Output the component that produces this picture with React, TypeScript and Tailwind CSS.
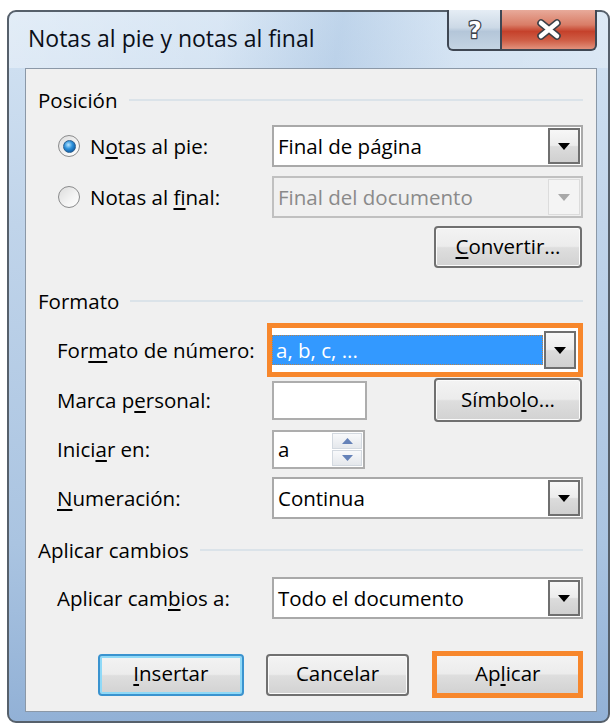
import React from "react";

function Caret({ disabled }: { disabled?: boolean }) {
  return (
    <svg width="12" height="7" viewBox="0 0 12 7">
      <path d="M0 0H12L6 7Z" fill={disabled ? "#a8a8a8" : "#000"} />
    </svg>
  );
}

function SpinArrow({ up }: { up?: boolean }) {
  return (
    <svg width="11" height="6" viewBox="0 0 11 6">
      <path d={up ? "M0 6H11L5.5 0Z" : "M0 0H11L5.5 6Z"} fill="#6582b8" />
    </svg>
  );
}

function Dropdown({ value, disabled }: { value: string; disabled?: boolean }) {
  return (
    <div
      className={`flex h-[42px] w-[311px] items-stretch border-2 ${
        disabled ? "border-[#c0c0c0] bg-[#f0f0f0]" : "border-[#a9a9a9] bg-white"
      }`}
    >
      <div className={`flex flex-1 items-center pl-[4px] ${disabled ? "text-[#8a8a8a]" : "text-black"}`}>{value}</div>
      {disabled ? (
        <div className="my-[1px] mr-[1px] flex w-[32px] items-center justify-center border border-[#dcdcdc] bg-[#f4f4f4]">
          <Caret disabled />
        </div>
      ) : (
        <div className="my-[1px] mr-[1px] flex w-[32px] items-center justify-center border-2 border-[#6f6f6f] bg-[linear-gradient(#f7f7f7,#ececec_48%,#dcdcdc_52%,#d0d0d0)]">
          <Caret />
        </div>
      )}
    </div>
  );
}

function Button({
  children,
  className,
  variant,
}: {
  children: React.ReactNode;
  className: string;
  variant?: "default" | "marked";
}) {
  if (variant === "marked") {
    return (
      <div className={`flex h-[47px] border-[5px] border-[#f7872c] ${className}`}>
        <div className="flex flex-1 items-center justify-center bg-[linear-gradient(#f3f3f3,#ececec_48%,#dedede_52%,#d2d2d2)] pb-[2px]">
          {children}
        </div>
      </div>
    );
  }
  const border =
    variant === "default"
      ? "border-[#3a93cf] shadow-[inset_0_0_0_2px_#8fd9f7]"
      : "border-[#707070] shadow-[inset_0_0_0_1px_#fbfbfb]";
  return (
    <div
      className={`flex h-[42px] items-center justify-center rounded-[4px] border-2 ${border} bg-[linear-gradient(#f3f3f3,#ececec_48%,#dedede_52%,#d2d2d2)] pb-[2px] ${className}`}
    >
      {children}
    </div>
  );
}

function Radio({ checked }: { checked?: boolean }) {
  return (
    <div className="flex h-[22px] w-[22px] items-center justify-center rounded-full border border-[#8a8b8c] bg-[linear-gradient(135deg,#dcdcdc,#f4f4f4_60%,#ffffff)]">
      {checked && (
        <div className="h-[13px] w-[13px] rounded-full border border-[#2c5f8e] bg-[radial-gradient(circle_at_40%_35%,#b9e6ff_0%,#2f93dc_40%,#0b559f_85%)]" />
      )}
    </div>
  );
}

function U({ children }: { children: React.ReactNode }) {
  return <span className="underline decoration-[2px] underline-offset-[3px]">{children}</span>;
}

function GroupHeader({ title }: { title: string }) {
  return (
    <div className="flex h-[24px] items-center gap-[11px]">
      <span>{title}</span>
      <div className="h-[2px] flex-1 bg-[#dbe3e9]" />
    </div>
  );
}

function Label({ children }: { children: React.ReactNode }) {
  return <div className="w-[234px] shrink-0 pl-[19px]">{children}</div>;
}

export default function App() {
  return (
    <div className="h-[725px] w-[612px] overflow-hidden bg-white font-['Open_Sans',sans-serif] leading-none text-black">
      <div className="ml-[7px] mt-[10px] flex h-[713px] w-[603px] flex-col rounded-[9px] border-2 border-[#56606b] bg-[linear-gradient(#d3e3f3,#c0d4ea_30%,#aac4e1_75%,#92b1d6)]">
        {/* caption bar */}
        <div className="flex h-[56px] shrink-0 items-start justify-between rounded-t-[8px] bg-[linear-gradient(100deg,rgba(255,255,255,0.35)_0%,rgba(255,255,255,0.15)_35%,rgba(120,160,205,0.22)_55%,rgba(255,255,255,0.12)_75%,rgba(255,255,255,0.25)_100%)]">
          <div className="flex h-[56px] items-center pb-[4px] pl-[19px] text-[23px] text-[#0b0f18]">
            Notas al pie y notas al final
          </div>
          <div className="-mt-[2px] mr-[11px] flex h-[41px]">
            <div className="flex w-[55px] items-center justify-center rounded-bl-[6px] border-2 border-t-0 border-[#3f4753] bg-[linear-gradient(#e5edf5,#ccd9e6_45%,#b4c6d9_55%,#c4d4e3)]">
              <svg width="22" height="28" viewBox="0 0 22 28">
                <text
                  x="11"
                  y="22"
                  textAnchor="middle"
                  fontFamily="'DejaVu Sans', sans-serif"
                  fontWeight="bold"
                  fontSize="23"
                  fill="#ffffff"
                  stroke="#3c424b"
                  strokeWidth="2.5"
                  strokeLinejoin="round"
                  paintOrder="stroke"
                >
                  ?
                </text>
              </svg>
            </div>
            <div className="flex w-[95px] items-center justify-center rounded-br-[6px] border-2 border-l-0 border-t-0 border-[#3f4753] bg-[linear-gradient(#e8aa9a,#d97d67_38%,#c5412b_55%,#cf5e46_78%,#e2917c)]">
              <svg width="26" height="21" viewBox="0 0 26 21">
                <path d="M5 4L21 17M21 4L5 17" stroke="#3a3f47" strokeWidth="7.5" strokeLinecap="round" />
                <path d="M5 4L21 17M21 4L5 17" stroke="#ffffff" strokeWidth="4.5" strokeLinecap="round" />
              </svg>
            </div>
          </div>
        </div>

        {/* client area */}
        <div className="ml-[16px] mr-[11px] flex h-[644px] flex-col border border-[#8b98a7] bg-[#f0f0f0] pl-[12px] pr-[13px] text-[20.5px]">
          <div className="mt-[19px]">
            <GroupHeader title="Posición" />
          </div>

          <div className="mt-[13px] flex items-center">
            <div className="flex w-[234px] shrink-0 items-center gap-[10px] pl-[20px]">
              <Radio checked />
              <span>
                N<U>o</U>tas al pie:
              </span>
            </div>
            <Dropdown value="Final de página" />
          </div>

          <div className="mt-[9px] flex items-center">
            <div className="flex w-[234px] shrink-0 items-center gap-[10px] pl-[20px]">
              <Radio />
              <span>
                Notas al <U>f</U>inal:
              </span>
            </div>
            <Dropdown value="Final del documento" disabled />
          </div>

          <div className="mt-[8px] flex justify-end pr-[1px]">
            <Button className="w-[148px]">
              <span>
                <U>C</U>onvertir...
              </span>
            </Button>
          </div>

          <div className="mt-[21px]">
            <GroupHeader title="Formato" />
          </div>

          <div className="mt-[10px] flex items-center">
            <div className="w-[229px] shrink-0 pl-[19px]">
              For<U>m</U>ato de número:
            </div>
            <div className="h-[54px] w-[321px] border-[5px] border-[#f7872c]">
              <div className="flex h-full items-stretch bg-white">
                <div className="my-[7px] flex flex-1 items-center border border-dotted border-[#b9824a] bg-[#3399ff] pl-[3px] text-white">
                  a, b, c, ...
                </div>
                <div className="my-[3px] ml-[1px] mr-[2px] flex w-[32px] items-center justify-center border-2 border-[#6f6f6f] bg-[linear-gradient(#f7f7f7,#ececec_48%,#dcdcdc_52%,#d0d0d0)]">
                  <Caret />
                </div>
              </div>
            </div>
          </div>

          <div className="mt-[1px] flex h-[44px] items-center">
            <Label>
              Marca p<U>e</U>rsonal:
            </Label>
            <div className="h-[39px] w-[95px] border-2 border-[#adadad] bg-white" />
            <Button className="ml-auto mr-[1px] h-[44px] w-[148px]">
              <span>
                Símbo<U>l</U>o...
              </span>
            </Button>
          </div>

          <div className="mt-[8px] flex items-center">
            <Label>
              Inici<U>a</U>r en:
            </Label>
            <div className="flex h-[39px] w-[93px] border-2 border-[#adadad] bg-white">
              <div className="flex flex-1 items-center pl-[4px]">a</div>
              <div className="my-[1px] mr-[1px] flex w-[30px] flex-col gap-[1px]">
                <div className="flex flex-1 items-center justify-center border border-[#d3d9e0] bg-[linear-gradient(#f8f9fb,#e5e8ec)]">
                  <SpinArrow up />
                </div>
                <div className="flex flex-1 items-center justify-center border border-[#d3d9e0] bg-[linear-gradient(#f8f9fb,#e5e8ec)]">
                  <SpinArrow />
                </div>
              </div>
            </div>
          </div>

          <div className="mt-[8px] flex items-center">
            <Label>
              <U>N</U>umeración:
            </Label>
            <Dropdown value="Continua" />
          </div>

          <div className="mt-[19px]">
            <GroupHeader title="Aplicar cambios" />
          </div>

          <div className="mt-[15px] flex items-center">
            <Label>
              Aplicar cam<U>b</U>ios a:
            </Label>
            <Dropdown value="Todo el documento" />
          </div>

          <div className="mt-[32px] flex items-center">
            <Button className="ml-[60px] w-[146px]" variant="default">
              <span>
                <U>I</U>nsertar
              </span>
            </Button>
            <Button className="ml-[22px] w-[144px]">
              <span>Cancelar</span>
            </Button>
            <Button className="ml-[23px] w-[151px]" variant="marked">
              <span>
                Ap<U>l</U>icar
              </span>
            </Button>
          </div>
        </div>
      </div>
    </div>
  );
}
